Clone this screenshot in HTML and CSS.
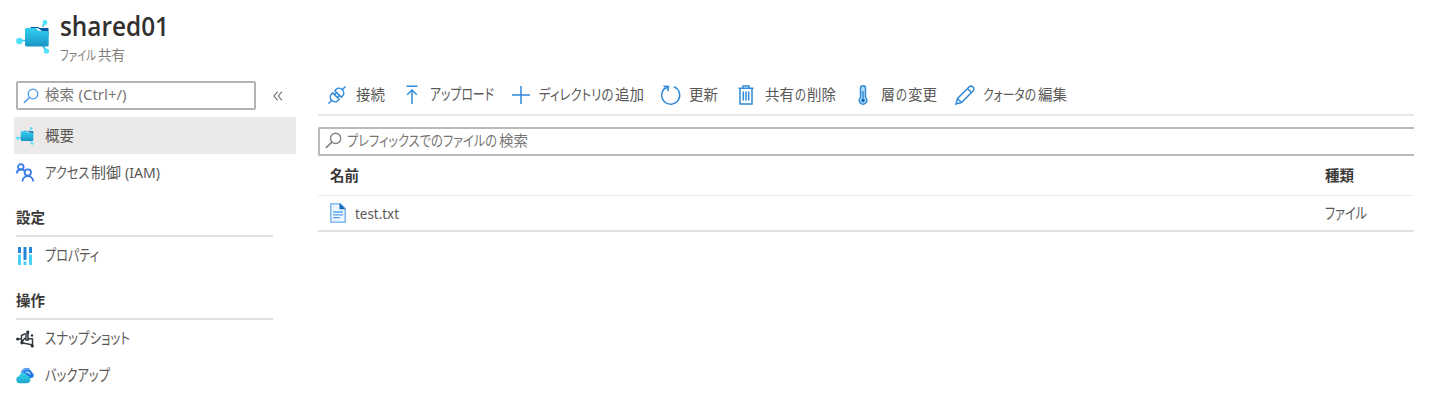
FILE: index.html
```html
<!DOCTYPE html>
<html lang="ja">
<head>
<meta charset="utf-8">
<title>shared01</title>
<link rel="stylesheet" href="styles.css">
</head>
<body>
<svg class="defs" width="0" height="0" aria-hidden="true">
  <defs>
    <linearGradient id="folder" x1="0" y1="0" x2="0" y2="1"><stop offset="0" stop-color="#32d0f0"/><stop offset="1" stop-color="#1794c4"/></linearGradient>
    <linearGradient id="cloud" x1="0" y1="0" x2="0" y2="1"><stop offset="0" stop-color="#35d4ee"/><stop offset="1" stop-color="#1ea6ce"/></linearGradient>
    <symbol id="share" viewBox="0 0 34 34">
      <path d="M4 20.500h7M26.500 7l2-4M27 26l3 5" stroke="#35bfe5" stroke-width="1.600"/>
      <path d="M13 9l2-2h7l2 1h8.500v8H13z" fill="#0b57a8"/>
      <path d="M14 8h8l4 3h4v4H14z" fill="#d8f2fb"/>
      <path d="M9 9.500Q9 8 10.500 8h9l3 3h8.500q1.700 0 1.700 1.500V25q0 1.600-1.600 1.600H10.600Q9 26.600 9 25z" fill="url(#folder)"/>
      <circle cx="3.400" cy="21" r="3.200" fill="#50e1fb"/><circle cx="29" cy="2.500" r="2.400" fill="#50e1fb"/><circle cx="30.500" cy="31" r="2.600" fill="#50e1fb"/>
    </symbol>
    <symbol id="lens" viewBox="0 0 16 16"><circle cx="10" cy="6" r="4.800" fill="none" stroke="currentColor" stroke-width="1.300"/><path d="M6.500 9.500L.8 15" fill="none" stroke="currentColor" stroke-width="1.500"/></symbol>
  </defs>
</svg>
<div class="page">
  <header class="head">
    <svg class="logo" width="34" height="34"><use href="#share" width="34" height="34"/></svg>
    <div class="names">
      <svg class="title" width="110" height="32"><text x="0" y="22" textLength="109" lengthAdjust="spacingAndGlyphs">shared01</text></svg>
      <svg class="label sub" width="70" height="18"><text x="0" y="14" textLength="36" lengthAdjust="spacingAndGlyphs">ファイル</text><text x="38" y="14" textLength="27" lengthAdjust="spacingAndGlyphs">共有</text></svg>
    </div>
  </header>
  <div class="body">
    <nav class="side">
      <div class="searchrow">
        <div class="search">
          <svg class="blue" width="16" height="16"><use href="#lens"/></svg>
          <svg class="label muted" width="90" height="20"><text x="0" y="14" textLength="29" lengthAdjust="spacingAndGlyphs">検索</text><text x="33.500" y="14" textLength="48" lengthAdjust="spacingAndGlyphs">(Ctrl+/)</text></svg>
        </div>
        <svg class="collapse" width="10" height="10" viewBox="0 0 10 10"><path d="M4.700.6L1 5l3.700 4.400M9 .6L5.300 5 9 9.400"/></svg>
      </div>
      <div class="item active"><svg width="18" height="18"><use href="#share" width="18" height="18"/></svg>
        <svg class="label" width="40" height="20"><text x="0" y="15" textLength="29" lengthAdjust="spacingAndGlyphs">概要</text></svg></div>
      <div class="item"><svg class="people" width="18" height="18" viewBox="0 0 18 18"><circle cx="4.800" cy="3" r="2.800"/><path d="M.8 9.500c.2-5 6-5.500 7.500-2.500"/><circle cx="11.800" cy="8.500" r="3.200"/><path d="M6.500 17.500c.4-7.200 10.200-7.200 10.700 0"/></svg>
        <svg class="label" width="120" height="20"><text x="0" y="15" textLength="44.500" lengthAdjust="spacingAndGlyphs">アクセス</text><text x="46" y="15" textLength="30" lengthAdjust="spacingAndGlyphs">制御</text><text x="80" y="15" textLength="35" lengthAdjust="spacingAndGlyphs">(IAM)</text></svg></div>
      <div class="group"><svg class="label strong" width="30" height="20"><text x="0" y="15.500" textLength="29" lengthAdjust="spacingAndGlyphs">設定</text></svg></div>
      <div class="item"><svg width="18" height="18" viewBox="0 0 18 18"><path d="M2 0h3v6H2zM7.500 0h3v13h-3zM13 0h3v6h-3z" fill="#2385d8"/><path d="M2 7.500h3V18H2zM7.500 14.500h3V18h-3zM13 7.500h3V18h-3z" fill="#4cd2fa"/></svg>
        <svg class="label kana" width="60" height="20"><text x="0" y="15" textLength="54" lengthAdjust="spacingAndGlyphs">プロパティ</text></svg></div>
      <div class="group"><svg class="label strong" width="30" height="20"><text x="0" y="16" textLength="29" lengthAdjust="spacingAndGlyphs">操作</text></svg></div>
      <div class="item"><svg width="18" height="18" viewBox="0 0 18 18"><path d="M1.600 9h3M5.500 12.500V5.500L8.500 4H12v4.500l4.500.5v6M5.500 12.500L9 8M7 13l10 2M12 8V1.500M10 5v5h3" fill="none" stroke="#333b42" stroke-width="1.500"/><circle cx="1.600" cy="9" r="1.500" fill="#252d34"/><circle cx="11.800" cy="2" r="1.600" fill="#252d34"/><circle cx="16.300" cy="16" r="1.600" fill="#252d34"/><circle cx="6" cy="12.800" r="1.600" fill="#252d34"/><circle cx="16" cy="5.500" r="1.200" fill="#252d34"/></svg>
        <svg class="label kana" width="90" height="20"><text x="0" y="14.500" textLength="85" lengthAdjust="spacingAndGlyphs">スナップショット</text></svg></div>
      <div class="item"><svg width="18" height="18" viewBox="0 0 18 18"><path d="M6 9a5 5 0 0 1 10-3.500c2.600 1.800 2.200 5.500-1 5.500H9z" fill="#1a78e5"/><path d="M6 6.500A5 4.500 0 0 1 13.500 2.500" fill="none" stroke="#5ea0ef" stroke-width="2.300"/><path d="M9.500 5.500a3 3 0 0 1 4.500 2" fill="none" stroke="#c5e4fb" stroke-width="1.300"/><path d="M4 16.200H3.600A3.500 3.500 0 0 1 3 9.300a4.400 4.400 0 0 1 8.300-.6 3.800 3.800 0 0 1-.1 7.500z" fill="url(#cloud)"/></svg>
        <svg class="label kana" width="70" height="20"><text x="0" y="14.500" textLength="65" lengthAdjust="spacingAndGlyphs">バックアップ</text></svg></div>
    </nav>
    <main class="main">
      <div class="toolbar">
        <div class="tool t1"><svg class="ico" width="20" height="20" viewBox="0 0 20 20"><g transform="rotate(-45 10 10)"><path d="M-2 10h4.500M17.500 10H22M8.500 5.500v9H6.500a4 4.500 0 0 1 0-9zM11.500 5.500v9h2a4 4.500 0 0 0 0-9zM8.500 8h3M8.500 12h3"/></g></svg>
          <svg class="label" width="30" height="20"><text x="0" y="15" textLength="29" lengthAdjust="spacingAndGlyphs">接続</text></svg></div>
        <div class="tool t2"><svg class="ico" width="14" height="20" viewBox="0 0 14 20"><path d="M1.500 1.200h11M7 19V5M2.200 9.800L7 5l4.800 4.800"/></svg>
          <svg class="label kana" width="65" height="20"><text x="0" y="15" textLength="64" lengthAdjust="spacingAndGlyphs">アップロード</text></svg></div>
        <div class="tool t3"><svg class="ico" width="20" height="20" viewBox="0 0 20 20"><path d="M1 10h18M10 1v18"/></svg>
          <svg class="label" width="105" height="20"><text x="0" y="15" textLength="74.500" lengthAdjust="spacingAndGlyphs">ディレクトリの</text><text x="76" y="15" textLength="29" lengthAdjust="spacingAndGlyphs">追加</text></svg></div>
        <div class="tool t4"><svg class="ico" width="20" height="20" viewBox="0 0 20 20"><path d="M13 1.800A9 9 0 1 1 5 2.500M2.500 1.200l5 .3-.6 4.700M5 3.500L7 2"/></svg>
          <svg class="label" width="30" height="20"><text x="0" y="15" textLength="29" lengthAdjust="spacingAndGlyphs">更新</text></svg></div>
        <div class="tool t5"><svg class="ico" width="16" height="20" viewBox="0 0 16 20"><path d="M.5 3.200h15M5 3V1h6v2M2 3.500V19h12V3.500M5.300 6.500v9M8 6.500v9M10.700 6.500v9"/></svg>
          <svg class="label" width="71" height="20"><text x="0" y="15" textLength="29" lengthAdjust="spacingAndGlyphs">共有</text><text x="30" y="15" textLength="11" lengthAdjust="spacingAndGlyphs">の</text><text x="42" y="15" textLength="29" lengthAdjust="spacingAndGlyphs">削除</text></svg></div>
        <div class="tool t6"><svg class="ico" width="10" height="20" viewBox="0 0 10 20"><path d="M2.500 12.500V3.200a2.500 2.500 0 0 1 5 0v9.300a3.800 3.800 0 1 1-5 0z" fill="#b9def8"/><path d="M5 6v8"/><circle cx="5" cy="15.500" r="1.800" fill="#0f6cbd" stroke="none"/></svg>
          <svg class="label" width="57" height="20"><text x="0" y="15" textLength="14" lengthAdjust="spacingAndGlyphs">層</text><text x="15" y="15" textLength="11" lengthAdjust="spacingAndGlyphs">の</text><text x="27" y="15" textLength="29" lengthAdjust="spacingAndGlyphs">変更</text></svg></div>
        <div class="tool t7"><svg class="ico" width="20" height="20" viewBox="0 0 20 20"><path d="M1 19l1.500-5.500L14 2q2-1.800 4 0t0 4L6.500 17.500zM2.500 13.500l4 4M12.500 3.500l4 4"/></svg>
          <svg class="label" width="85" height="20"><text x="0" y="15" textLength="53" lengthAdjust="spacingAndGlyphs">クォータの</text><text x="55" y="15" textLength="29" lengthAdjust="spacingAndGlyphs">編集</text></svg></div>
      </div>
      <div class="filter">
        <svg class="gray" width="17" height="17"><use href="#lens" width="17" height="17"/></svg>
        <svg class="label muted" width="185" height="20"><text x="0" y="15" textLength="150" lengthAdjust="spacingAndGlyphs">プレフィックスでのファイルの</text><text x="152" y="15" textLength="29" lengthAdjust="spacingAndGlyphs">検索</text></svg>
      </div>
      <div class="row headrow">
        <svg class="label strong" width="30" height="20"><text x="0" y="15" textLength="29" lengthAdjust="spacingAndGlyphs">名前</text></svg>
        <div class="kind"><svg class="label strong" width="30" height="20"><text x="0" y="15" textLength="29" lengthAdjust="spacingAndGlyphs">種類</text></svg></div>
      </div>
      <div class="row filerow">
        <svg width="16" height="20" viewBox="0 0 16 20"><path d="M.8.8h9.700l4.700 4.700v13.700H.8z" fill="#eef6fe" stroke="#69acee" stroke-width="1.300"/><path d="M9.500.3l6 6h-6z" fill="#1068bf"/><path d="M3 9h10M3 11.800h10M3 14.600h7" stroke="#5ba4ee" stroke-width="1.300"/></svg>
        <svg class="label" width="50" height="20"><text x="0" y="16" textLength="44" lengthAdjust="spacingAndGlyphs">test.txt</text></svg>
        <div class="kind"><svg class="label kana" width="50" height="20"><text x="0" y="15.500" textLength="42" lengthAdjust="spacingAndGlyphs">ファイル</text></svg></div>
      </div>
    </main>
  </div>
</div>
</body>
</html>
```
FILE: styles.css
```css
* { box-sizing: border-box; }
body { margin: 0; background: #fff; color: #484644; font-family: "Noto Sans", "Noto Sans CJK JP", sans-serif; }
svg { display: block; flex: none; overflow: visible; }
.defs { position: absolute; }
.page { width: 1438px; height: 414px; overflow: hidden; }
.head { display: flex; height: 81px; padding: 14px 0 0 16px; gap: 10px; }
.logo { margin-top: 6px; }
.title { font: 600 26.500px "Open Sans", "Noto Sans", sans-serif; fill: #323130; }
.label { font-size: 14.700px; fill: #5a5856; font-feature-settings: "palt"; }
.kana { font-size: 15.500px; }
.sub { font-size: 13.500px; fill: #7e7c7a; }
.muted { fill: #777573; }
.strong { font-weight: 600; fill: #3b3a39; }
.body { display: flex; }
.side { width: 282px; margin-left: 14px; }
.searchrow { display: flex; align-items: center; height: 29px; margin: 0 0 7px 2px; gap: 17px; }
.search { display: flex; align-items: center; width: 240px; height: 29px; padding-left: 5px; gap: 6px; border: 2px solid #b5b3b2; border-radius: 2px; }
.blue { color: #4a9ae6; }
.gray { color: #858381; }
.collapse path { fill: none; stroke: #6c6a68; stroke-width: 1.100; }
.item { display: flex; align-items: center; height: 37px; padding-left: 2px; gap: 11px; }
.item.active { background: #ebeae9; }
.people { fill: none; stroke: #387bea; stroke-width: 1.800; }
.group { width: 257px; height: 46px; margin-left: 2px; padding-top: 16px; border-bottom: 2px solid #e1e0df; }
.main { width: 1096px; margin-left: 22px; }
.toolbar { display: flex; height: 35px; padding-left: 9px; border-bottom: 2px solid #e8e7e6; }
.tool { display: flex; height: 27px; align-items: center; }
.t1 { gap: 9px; margin-right: 19px; }
.t2 { gap: 11px; margin-right: 16px; }
.t3 { gap: 8px; margin-right: 17px; }
.t4 { gap: 8px; margin-right: 19px; }
.t5 { gap: 11px; margin-right: 22px; }
.t6 { gap: 13px; margin-right: 17px; }
.t7 { gap: 8px; }
.ico { fill: none; stroke: #318bd8; stroke-width: 1.500; }
.filter { display: flex; align-items: center; height: 29px; margin-top: 11px; padding-left: 5px; padding-bottom: 2px; gap: 5px; border: 2px solid #bcbab9; border-right: 0; border-radius: 2px 0 0 2px; }
.row { display: flex; align-items: center; padding-left: 12px; }
.headrow { height: 40px; border-bottom: 1px solid #edecec; }
.filerow { height: 36px; gap: 9px; border-bottom: 2px solid #e1e0df; }
.kind { width: 89px; margin-left: auto; }
```
